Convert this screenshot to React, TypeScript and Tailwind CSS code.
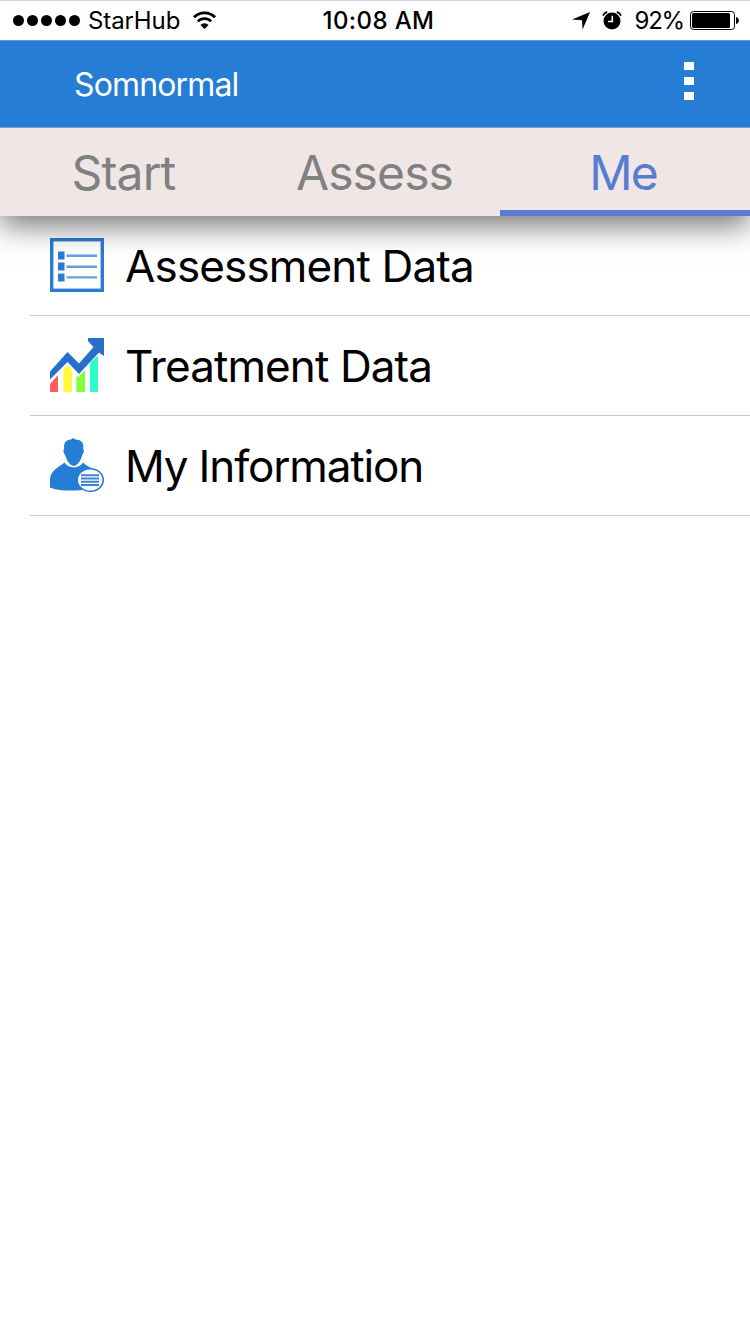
import React, { useState } from 'react';

type TabName = 'Start' | 'Assess' | 'Me';

const tabs: { name: TabName; label: string }[] = [
    { name: 'Start', label: 'tracking-[-0.85px] pr-[3px]' },
    { name: 'Assess', label: 'tracking-[-0.9px] pr-[1px]' },
    { name: 'Me', label: 'tracking-[-2px] pr-[4px]' },
];

const WifiIcon: React.FC = () => (
    <svg width="25" height="19" viewBox="0 0 26 20">
        <path d="M1.9 6.6a15.6 15.6 0 0 1 22.2 0" fill="none" stroke="#000" strokeWidth="3" />
        <path d="M6 10.9a9.8 9.8 0 0 1 14 0" fill="none" stroke="#000" strokeWidth="2.8" />
        <path d="M13 19l-4.3-4.3a6.1 6.1 0 0 1 8.6 0z" />
    </svg>
);

const LocationIcon: React.FC = () => (
    <svg width="18" height="18" viewBox="0 0 18 18">
        <path d="M18 0L10.6 17.5 10 8.3 0 7.4z" />
    </svg>
);

const AlarmIcon: React.FC = () => (
    <svg width="20" height="19" viewBox="0 0 20 19">
        <circle cx="10" cy="10" r="8.5" />
        <path d="M1 4.6A6 6 0 0 1 5.2 1M19 4.6A6 6 0 0 0 14.8 1" fill="none" stroke="#000" strokeWidth="1.8" />
        <path d="M10.3 4.8v5.7H6" fill="none" stroke="#fff" strokeWidth="1.6" />
    </svg>
);

const BatteryIcon: React.FC = () => (
    <svg width="49" height="19" viewBox="0 0 49 19">
        <rect x=".5" y=".5" width="44" height="18" rx="3" fill="#fff" stroke="#000" />
        <rect x="2" y="2" width="38" height="15" rx="1.5" />
        <path d="M46 6c3.8.7 3.8 6.3 0 7z" />
    </svg>
);

const ListIcon: React.FC = () => (
    <svg width="54" height="54" viewBox="0 0 54 54">
        <rect x="1.7" y="1.7" width="50.6" height="50.6" fill="#fff" stroke="#2a7bd2" strokeWidth="3.4" />
        <path d="M8 13.5h6.5v8H8zM8 24.5h6.5v8H8zM8 35.5h6.5v8H8z" fill="#2a7bd2" />
        <path d="M16.5 17.8H47M16.5 28.7H47M16.5 39.4H47" stroke="#6b9dde" strokeWidth="2.4" />
    </svg>
);

const ChartIcon: React.FC = () => (
    <svg width="54" height="54" viewBox="0 0 54 54">
        <path d="M0 46l8-9v17H0z" fill="#ff5c60" />
        <path d="M13.5 31l4.2-3.7L22 32v22h-8.5z" fill="#fffb3c" />
        <path d="M26.5 37.5l2.2 1.5 6.3-7v22h-8.5z" fill="#7eff36" />
        <path d="M40 25l8-7.5V54h-8z" fill="#2cffc9" />
        <path d="M0 33.5L17.5 14 29 25.5 43.5 9 38 3V0h16v18l-5-3.5L29 36 17.5 24 0 41.5z" fill="#2670cc" />
    </svg>
);

const PersonIcon: React.FC = () => (
    <svg width="54" height="54" viewBox="0 0 54 54">
        <path d="M0 49.5C-.5 40 0 36 4.5 32c2-2 5-3.5 10-7.5 4.500 6.500 14 6.500 18.500 0 3.500 3.500 6.500 4.500 9.500 6L40 46l-8 6c-10 1-24 1-32-2.500z" fill="#257dd5" />
        <path d="M14.200 11C13.500 4 16 2 21 1.500L23 0l2.500 1.500C32 2 34 5 33.200 11c1.200 1 .6 5-.8 5.500C31 22 28 27.500 23.700 28 19.500 27.500 16.500 22 15 16.500c-1.500-.5-2.100-4.500-.8-5.500z" fill="#257dd5" />
        <ellipse cx="40.5" cy="42" rx="13.5" ry="12" fill="#257dd5" />
        <ellipse cx="40.2" cy="42" rx="12.2" ry="10.5" fill="#fff" />
        <path d="M31 37.2h18M31 40.5h18M31 43.8h18M31 47h18" stroke="#3d83d2" strokeWidth="2" />
    </svg>
);

const rows = [
    { label: 'Assessment Data', Icon: ListIcon, text: 'tracking-[-0.85px]' },
    { label: 'Treatment Data', Icon: ChartIcon, text: 'tracking-[-0.9px]' },
    { label: 'My Information', Icon: PersonIcon, text: 'tracking-[-1.15px]' },
];

const StatusBar: React.FC = () => (
    <div className="grid h-10 grid-cols-3 items-center border-t border-[#ccd8e8] text-[24px] leading-none">
        <div className="flex items-center pl-[13px]">
            <div className="flex gap-[3px]">
                {[0, 1, 2, 3, 4].map(i => (
                    <span key={i} className="size-[11px] rounded-full bg-black" />
                ))}
            </div>
            <span className="ml-2 mr-3 tracking-[-0.1px]">StarHub</span>
            <WifiIcon />
        </div>
        <span className="pl-[7px] text-center font-medium tracking-[0.4px] whitespace-nowrap">10:08 AM</span>
        <div className="flex items-center justify-end pr-[11px]">
            <LocationIcon />
            <span className="ml-3 mr-[13px]"><AlarmIcon /></span>
            <span className="mr-[6px] tracking-[-1.2px]">92%</span>
            <BatteryIcon />
        </div>
    </div>
);

const App: React.FC = () => {
    const [active, setActive] = useState<TabName>('Me');

    return (
        <div className="min-h-screen w-[750px] overflow-hidden bg-white font-['Inter','Liberation_Sans',sans-serif] text-black">
            <StatusBar />
            <header className="relative z-20 flex h-[88px] items-center justify-between border-t border-b border-t-[#5f9bdd] border-b-[#7f9fcb] bg-[#257dd5] pl-[74px] pr-[56px]">
                <h1 className="pt-px text-[32px] font-normal leading-none tracking-[-0.85px] text-white">Somnormal</h1>
                <button className="mb-[6px] flex flex-col gap-[6.5px]" aria-label="Menu">
                    <span className="h-[8.5px] w-[10.5px] bg-white" />
                    <span className="h-[8.5px] w-[10.5px] bg-white" />
                    <span className="h-[8.5px] w-[10.5px] bg-white" />
                </button>
            </header>
            <nav className="relative z-10 grid h-[88px] grid-cols-3 bg-[#f0e6e5] shadow-[0_10px_28px_rgba(0,0,0,0.53)]">
                {tabs.map(t => (
                    <button
                        key={t.name}
                        onClick={() => setActive(t.name)}
                        className={`flex items-center justify-center border-b-6 pt-[7px] text-[48px] leading-none ${t.label} ${active === t.name ? 'border-[#567dd3] text-[#567dd3]' : 'border-transparent text-[#808080]'}`}
                    >
                        {t.name}
                    </button>
                ))}
            </nav>
            <ul className="pl-[30px]">
                {rows.map(({ label, Icon, text }) => (
                    <li key={label} className="flex h-[100px] items-center gap-[21px] border-b border-[#c8c7cc] pb-px pl-5">
                        <Icon />
                        <span className={`pt-[2px] text-[44px] leading-none ${text}`}>{label}</span>
                    </li>
                ))}
            </ul>
        </div>
    );
};

export default App;
